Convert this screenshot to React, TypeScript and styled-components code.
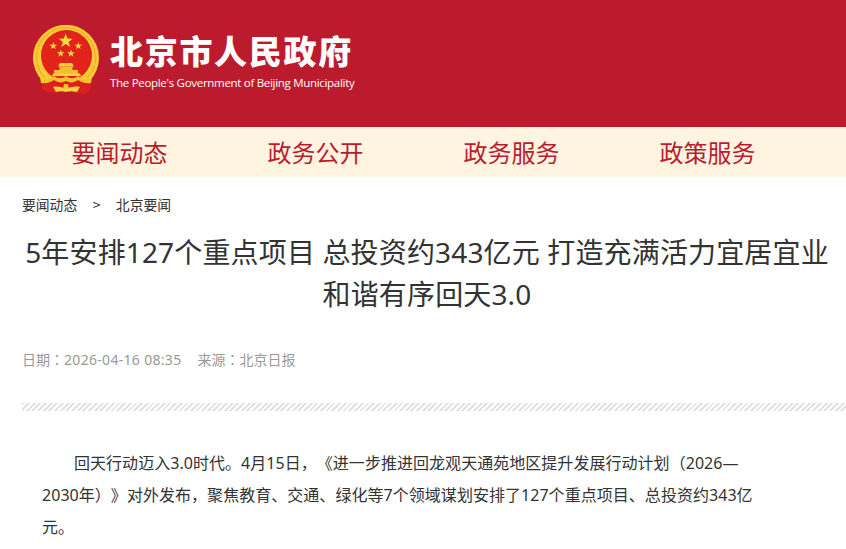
import React from "react";
import styled, { createGlobalStyle } from "styled-components";

const CJK = `"Noto Sans CJK SC", "Noto Sans", sans-serif`;
const LATIN_CJK = `"Noto Sans", "Noto Sans CJK SC", sans-serif`;

const GlobalStyle = createGlobalStyle`
  html, body {
    margin: 0;
    padding: 0;
    background: #fff;
    overflow: hidden;
  }
  body {
    font-family: ${LATIN_CJK};
    text-spacing-trim: space-all;
  }
`;

const Page = styled.div`
  width: 846px;
  height: 549px;
  overflow: hidden;
`;

const Header = styled.header`
  height: 127px;
  background: #bc1b2e;
  display: flex;
  align-items: flex-start;
  gap: 10px;
  padding: 25px 0 0 33px;
  box-sizing: border-box;
`;

const LogoText = styled.div`
  display: flex;
  flex-direction: column;
  color: #fff;
`;

const SiteName = styled.div`
  font-family: ${CJK};
  font-weight: 900;
  font-size: 33px;
  line-height: 50px;
  letter-spacing: 1.7px;
  white-space: nowrap;
`;

const SiteNameEn = styled.div`
  font-family: "Open Sans", sans-serif;
  font-size: 11.5px;
  line-height: 16px;
  letter-spacing: -0.3px;
  white-space: nowrap;
`;

const Nav = styled.nav`
  height: 50px;
  background: #fef4e0;
  display: grid;
  grid-template-columns: repeat(4, 196px);
  padding-left: 21.5px;
`;

const NavItem = styled.a`
  font-family: ${CJK};
  font-size: 24px;
  line-height: 50px;
  text-align: center;
  color: #bc1b2e;
`;

const Main = styled.main`
  padding: 0 14px 0 22px;
`;

const Crumbs = styled.div`
  display: flex;
  gap: 15.5px;
  padding-top: 17px;
  font-family: ${CJK};
  font-size: 13.8px;
  line-height: 20px;
  color: #333;
`;

const Title = styled.h1`
  margin: 17px 0 0;
  font-weight: 400;
  font-size: 28px;
  line-height: 42px;
  letter-spacing: 0.15px;
  text-align: center;
  color: #333;
`;

const Meta = styled.div`
  display: flex;
  gap: 16px;
  margin-top: 34px;
  font-size: 14px;
  line-height: 20px;
  color: #999;
`;

const Colon = styled.span`
  font-family: "Noto Sans CJK TC", sans-serif;
`;

const DateText = styled.span`
  letter-spacing: 0.31px;
`;

const Hatch = styled.div`
  height: 8px;
  margin: 33px -14px 0 0;
  background: repeating-linear-gradient(
    135deg,
    #e2e2e2 0 2px,
    #fff 2px 4px
  );
`;

const Body = styled.div`
  padding: 36px 76px 0 20px;
`;

const Para = styled.p`
  margin: 0;
  font-size: 16px;
  line-height: 32px;
  letter-spacing: 0.04px;
  text-indent: 32px;
  color: #333;
`;

// five-pointed star centred on cx,cy
const starPoints = (cx: number, cy: number, r: number) =>
  Array.from({ length: 10 }, (_, i) => {
    const radius = i % 2 === 0 ? r : r * 0.4;
    const angle = -Math.PI / 2 + (i * Math.PI) / 5;
    return `${(cx + radius * Math.cos(angle)).toFixed(2)},${(cy + radius * Math.sin(angle)).toFixed(2)}`;
  }).join(" ");

const Emblem: React.FC = () => (
  <svg width="67" height="71" viewBox="0 0 67 71" style={{ flex: "none" }}>
    {/* wheat ring, open at the bottom */}
    <path d="M9.500 56A33 33 0 1 1 56.500 56L50 60H16z" fill="#f6cb38" />
    <path d="M12 53A29.500 29.500 0 1 1 54 53" fill="none" stroke="#eeb52a" strokeWidth="1.500" />
    <circle cx="33.500" cy="30.500" r="25.500" fill="#e2231a" />
    <polygon points={starPoints(32.7, 16, 7.5)} fill="#fbdc3c" />
    <polygon points={starPoints(20.3, 21, 4)} fill="#fbdc3c" />
    <polygon points={starPoints(45.3, 21, 4)} fill="#fbdc3c" />
    <polygon points={starPoints(27.7, 28.5, 4)} fill="#fbdc3c" />
    <polygon points={starPoints(38, 28.5, 4)} fill="#fbdc3c" />
    {/* gate tower */}
    <path d="M27 38h12l2 3.500H25z" fill="#f9cf3a" />
    <path d="M26.500 41.500h13V45H45v4H21v-4h5.500z" fill="#f2bd2e" />
    <path d="M20 48.500h27l1 2.500H19z" fill="#f9d23f" />
    {/* red cloth */}
    <path d="M9 56l8-1h33l8 1-1 10-5 3-9-1-10-3-10 3-9-1-5-3z" fill="#dc1f1f" />
    {/* garland */}
    <path d="M7 53c5 3 10 1 14-2 4 3 8 3 12 0 4 3 8 3 12 0 4 3 9 5 14 2l-1 5c-5 1-10-1-13-3-4 3-8 3-12 1-4 2-8 2-12-1-3 2-8 4-13 3z" fill="#f5c22f" />
    {/* bow */}
    <path d="M20 62c4-1 9 0 13 2 4-2 9-3 14-2l-3 5c-4-1-8-1-11 0-3-1-7-1-10 0z" fill="#f9d23f" />
    <path d="M31 59h4l1 5h-6z" fill="#f5c22f" />
  </svg>
);

const navItems = ["要闻动态", "政务公开", "政务服务", "政策服务"];

const App: React.FC = () => (
  <Page>
    <GlobalStyle />
    <Header>
      <Emblem />
      <LogoText>
        <SiteName>北京市人民政府</SiteName>
        <SiteNameEn>The People's Government of Beijing Municipality</SiteNameEn>
      </LogoText>
    </Header>
    <Nav>
      {navItems.map((item) => (
        <NavItem key={item}>{item}</NavItem>
      ))}
    </Nav>
    <Main>
      <Crumbs>
        <span>要闻动态</span>
        <span>&gt;</span>
        <span>北京要闻</span>
      </Crumbs>
      <Title>5年安排127个重点项目 总投资约343亿元 打造充满活力宜居宜业和谐有序回天3.0</Title>
      <Meta>
        <span>
          日期<Colon>：</Colon>
          <DateText>2026-04-16 08:35</DateText>
        </span>
        <span>
          来源<Colon>：</Colon>北京日报
        </span>
      </Meta>
      <Hatch />
      <Body>
        <Para>
          回天行动迈入3.0时代。4月15日，《进一步推进回龙观天通苑地区提升发展行动计划（2026—2030年）》对外发布，聚焦教育、交通、绿化等7个领域谋划安排了127个重点项目、总投资约343亿元。
        </Para>
      </Body>
    </Main>
  </Page>
);

export default App;
